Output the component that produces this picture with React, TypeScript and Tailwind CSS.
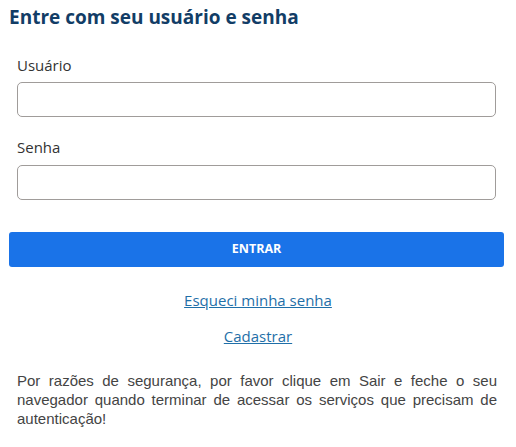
import React from 'react';

export default function App() {
  return (
    <div className="w-[516px] h-[447px] bg-white font-['Open_Sans',sans-serif]">
      <h1 className="pl-[9px] pt-[5px] text-[19px] leading-[24px] font-bold text-[#123d66]">
        Entre com seu usuário e senha
      </h1>

      <form className="mt-[26px]" onSubmit={(event) => event.preventDefault()}>
        <div className="px-[17px] pr-[20px]">
          <label className="block text-[15px] leading-[20px] text-[#333]">Usuário</label>
          <input
            type="text"
            className="mt-[7px] block h-[35px] w-full rounded-[5px] border border-[#a09c9a] bg-white"
          />

          <label className="mt-[20px] block text-[15px] leading-[20px] text-[#333]">Senha</label>
          <input
            type="password"
            className="mt-[8px] block h-[35px] w-full rounded-[5px] border border-[#a09c9a] bg-white"
          />
        </div>

        <div className="mt-[32px] px-[9px] pr-[12px]">
          <button
            type="submit"
            className="block h-[35px] w-full rounded-[3px] bg-[#1a73e8] text-[12.5px] font-bold text-white"
          >
            ENTRAR
          </button>
        </div>
      </form>

      <div className="mt-[23px] flex flex-col items-center gap-[16px] text-[15px] leading-[20px] text-[#1f6fa8]">
        <a href="#" className="underline">Esqueci minha senha</a>
        <a href="#" className="underline">Cadastrar</a>
      </div>

      <p className="mt-[25px] pl-[17px] pr-[19px] text-justify text-[15px] leading-[19px] text-[#444] font-['Liberation_Sans',sans-serif]">
        Por razões de segurança, por favor clique em Sair e feche o seu navegador quando terminar de
        acessar os serviços que precisam de autenticação!
      </p>
    </div>
  );
}
